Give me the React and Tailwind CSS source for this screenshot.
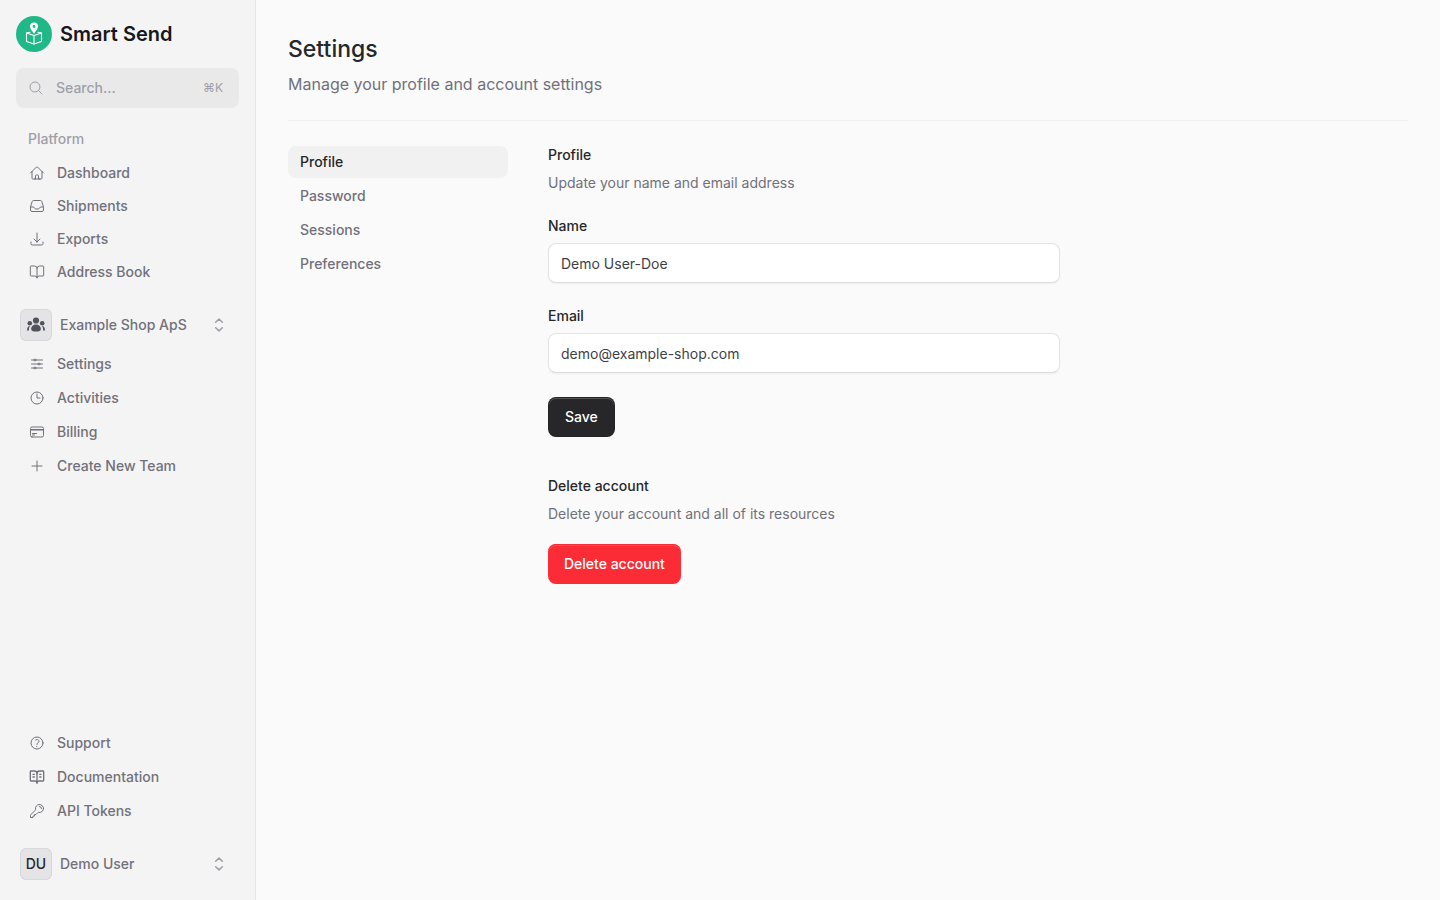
import {
  HiOutlineHome,
  HiOutlineInbox,
  HiOutlineArrowDownTray,
  HiOutlineAdjustmentsHorizontal,
  HiOutlineClock,
  HiOutlineCreditCard,
  HiOutlinePlus,
  HiOutlineQuestionMarkCircle,
  HiOutlineKey,
  HiOutlineMagnifyingGlass,
} from "react-icons/hi2";
import { BookOpen, BookOpenText } from "lucide-react";

function Logo() {
  return (
    <svg viewBox="0 0 36 36" className="size-9 shrink-0" aria-hidden="true">
      <circle cx="18" cy="18" r="18" fill="#21b888" />
      <g fill="none" stroke="#fff" strokeWidth="1.1" strokeLinejoin="round" strokeLinecap="round">
        <path d="M14 16.200 10.500 17.100v8.400L18 27.900l7.500-2.400v-8.400L22 16.200" />
        <path d="M10.500 17.100 18 19.600l7.500-2.500M18 19.600v8.300" />
      </g>
      <path
        fill="#fff"
        fillRule="evenodd"
        d="M18 6.400a4 4 0 0 0-4 4c0 2.600 2.400 4.300 4 7.400 1.600-3.100 4-4.800 4-7.400a4 4 0 0 0-4-4Zm0 2.700a1.400 1.400 0 1 1 0 2.800 1.400 1.400 0 0 1 0-2.800Z"
      />
    </svg>
  );
}

function TeamIcon() {
  return (
    <svg viewBox="0 0 20 20" className="size-5" fill="#52525b" aria-hidden="true">
      <circle cx="10" cy="5.500" r="3.100" />
      <circle cx="3.800" cy="8.200" r="2.300" />
      <circle cx="16.200" cy="8.200" r="2.300" />
      <path d="M10 9.400c-2.600 0-4.900 2-4.900 4.600 0 1.800 1.800 2.600 4.900 2.600s4.900-.8 4.900-2.600c0-2.600-2.300-4.600-4.900-4.600Z" />
      <path d="M4 11.100C2 11.200 1 12.800 1 15.400h1.900c-.1-1.700.3-3.200 1.100-4.300ZM16 11.100c2 .1 3 1.700 3 4.300h-1.900c.1-1.700-.3-3.200-1.100-4.300Z" />
    </svg>
  );
}

function UpDown() {
  return (
    <svg
      viewBox="0 0 24 24"
      className="size-5 text-zinc-400"
      fill="none"
      stroke="currentColor"
      strokeWidth="1.900"
      strokeLinecap="round"
      strokeLinejoin="round"
      aria-hidden="true"
    >
      <path d="M8 15.300 12 19l4-3.700M8 8.700 12 5l4 3.700" />
    </svg>
  );
}

const platform = [
  ["Dashboard", <HiOutlineHome className="size-4" />],
  ["Shipments", <HiOutlineInbox className="size-4" />],
  ["Exports", <HiOutlineArrowDownTray className="size-4" />],
  ["Address Book", <BookOpen className="size-4" strokeWidth={1.5} />],
];

const team = [
  ["Settings", <HiOutlineAdjustmentsHorizontal className="size-4" />],
  ["Activities", <HiOutlineClock className="size-4" />],
  ["Billing", <HiOutlineCreditCard className="size-4" />],
  ["Create New Team", <HiOutlinePlus className="size-4" />],
];

const help = [
  ["Support", <HiOutlineQuestionMarkCircle className="size-4" />],
  ["Documentation", <BookOpenText className="size-4" strokeWidth={2} />],
  ["API Tokens", <HiOutlineKey className="size-4" />],
];

function NavItem({ label, icon }) {
  return (
    <a href="#" className="ml-px flex h-8 items-center gap-3 rounded-lg px-3 text-sm font-medium text-zinc-500">
      {icon}
      <span>{label}</span>
    </a>
  );
}

function ProfileButton({ label, children }) {
  return (
    <button type="button" className="flex h-10 w-full items-center rounded-lg p-1 text-sm font-medium text-zinc-500">
      <span className="flex size-8 shrink-0 items-center justify-center rounded-md border border-zinc-300/80 bg-zinc-200 text-zinc-800">
        {children}
      </span>
      <span className="ml-2 flex-1 text-left">{label}</span>
      <span className="mr-1.5">
        <UpDown />
      </span>
    </button>
  );
}

function Field({ id, label, type, value }) {
  return (
    <div className="flex flex-col gap-2">
      <label htmlFor={id} className="text-sm leading-[18px] font-medium text-zinc-800">
        {label}
      </label>
      <input
        id={id}
        type={type}
        defaultValue={value}
        className="h-10 w-full rounded-lg border border-zinc-200 border-b-zinc-300/80 bg-white px-3 text-sm text-zinc-700 shadow-xs"
      />
    </div>
  );
}

function SectionHeading({ title, children }) {
  return (
    <>
      <h2 className="text-sm leading-[18px] font-medium">{title}</h2>
      <p className="mt-2 text-sm leading-[22px] text-zinc-500">{children}</p>
    </>
  );
}

const tabs = ["Password", "Sessions", "Preferences"];

export default function App() {
  return (
    <div className="flex min-h-screen bg-[#fafafa] font-['Inter','Liberation_Sans',sans-serif] text-zinc-800 antialiased">
      <aside className="flex w-64 shrink-0 flex-col border-r border-zinc-200 bg-[#f4f4f4] p-4">
        <a href="#" className="flex items-center gap-2 text-xl font-semibold text-zinc-900">
          <Logo />
          <span>Smart Send</span>
        </a>
        <button
          type="button"
          className="mt-4 flex h-10 items-center rounded-lg bg-[#e9e9e9] pr-4 pl-3 text-sm font-medium text-zinc-400"
        >
          <HiOutlineMagnifyingGlass className="size-4" />
          <span className="ml-3 flex-1 text-left">Search...</span>
          <span className="text-xs font-normal">⌘K</span>
        </button>
        <nav aria-label="Platform" className="mt-[21px]">
          <div className="px-3 pb-2 text-sm font-medium text-zinc-400">Platform</div>
          <div className="flex flex-col gap-px">
            {platform.map(([label, icon]) => (
              <NavItem key={label} label={label} icon={icon} />
            ))}
          </div>
        </nav>
        <div className="mt-[17px]">
          <ProfileButton label="Example Shop ApS">
            <TeamIcon />
          </ProfileButton>
        </div>
        <nav aria-label="Team" className="mt-[3px] flex flex-col gap-0.5">
          {team.map(([label, icon]) => (
            <NavItem key={label} label={label} icon={icon} />
          ))}
        </nav>
        <nav aria-label="Help" className="mt-auto flex flex-col gap-0.5 pt-4">
          {help.map(([label, icon]) => (
            <NavItem key={label} label={label} icon={icon} />
          ))}
        </nav>
        <div className="mt-[17px]">
          <ProfileButton label="Demo User">DU</ProfileButton>
        </div>
      </aside>

      <main className="min-w-0 flex-1 p-8">
        <header className="border-b border-zinc-800/5 pb-6">
          <h1 className="text-[23px] leading-[34px] font-medium">Settings</h1>
          <p className="mt-1.5 text-base text-zinc-500">Manage your profile and account settings</p>
        </header>
        <div className="mt-[25px] flex items-start gap-10">
          <nav aria-label="Settings" className="flex w-[220px] shrink-0 flex-col gap-0.5 text-sm font-medium text-zinc-500">
            <a href="#" aria-current="page" className="flex h-8 items-center rounded-lg bg-[#f1f1f1] px-3 text-zinc-800">
              Profile
            </a>
            {tabs.map((tab) => (
              <a key={tab} href="#" className="flex h-8 items-center rounded-lg px-3">
                {tab}
              </a>
            ))}
          </nav>
          <div className="w-full max-w-lg">
            <section>
              <SectionHeading title="Profile">Update your name and email address</SectionHeading>
              <form className="mt-[23px] flex flex-col gap-6" onSubmit={(e) => e.preventDefault()}>
                <Field id="name" label="Name" type="text" value="Demo User-Doe" />
                <Field id="email" label="Email" type="email" value="demo@example-shop.com" />
                <button
                  type="submit"
                  className="h-10 self-start rounded-lg border border-black/10 bg-zinc-800 px-4 text-sm font-medium text-white shadow-[inset_0_1px_rgba(255,255,255,0.2)]"
                >
                  Save
                </button>
              </form>
            </section>
            <section className="mt-10">
              <SectionHeading title="Delete account">Delete your account and all of its resources</SectionHeading>
              <button
                type="button"
                className="mt-[19px] h-10 rounded-lg bg-[#fb2c36] px-4 text-sm font-medium text-white shadow-[inset_0_1px_#fb2c36,inset_0_2px_rgba(255,255,255,0.15)]"
              >
                Delete account
              </button>
            </section>
          </div>
        </div>
      </main>
    </div>
  );
}
